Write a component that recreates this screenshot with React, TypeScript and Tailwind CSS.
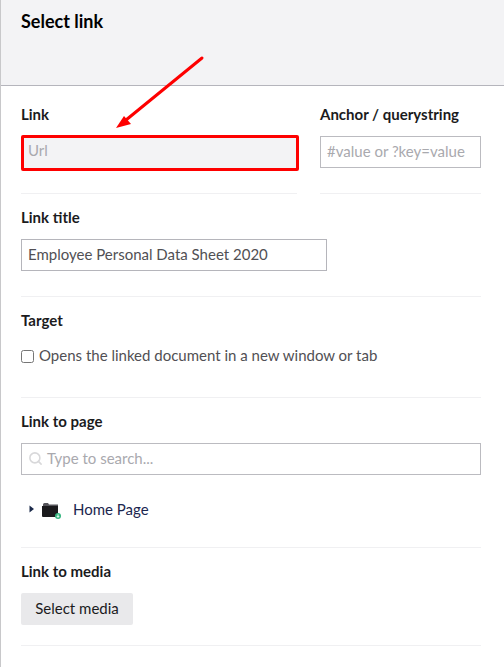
import { Search } from "lucide-react";

const font = { fontFamily: "Lato, 'Open Sans', sans-serif" };

const Label = ({ children }: { children: string }) => (
  <div className="text-[15px] leading-5 font-bold text-[#1b1b1d]">{children}</div>
);

const App = () => {
  return (
    <div className="relative h-[667px] w-[504px] overflow-hidden bg-white border-l border-[#c8c8ca]" style={font}>
      {/* Header */}
      <div className="h-[86px] bg-[#f3f3f5] border-b border-[#b5b5bc] pl-[20px] pt-[9px]">
        <h1 className="text-[18px] leading-6 font-bold text-[#000]">Select link</h1>
      </div>

      <div className="pl-[20px] pr-[23px]">
        {/* Link + anchor */}
        <div className="flex gap-[23px] pt-[18px]">
          <div className="w-[276px] border-b border-[#f0f0f2] h-[90px]">
            <Label>Link</Label>
            <div className="mt-[11px] w-[278px] h-[36px] pb-[6px] border-[3px] border-[#fe0000] rounded-[2px] bg-[#f3f3f5] flex items-center pl-[4px] text-[15px] text-[#a9a9ae]">
              Url
            </div>
          </div>
          <div className="w-[161px] border-b border-[#f0f0f2] h-[90px]">
            <Label>Anchor / querystring</Label>
            <div className="mt-[12px] w-[161px] h-[32px] pb-[2px] border border-[#bbbbc0] flex items-center pl-[6px] text-[15px] text-[#a9a9ae] whitespace-nowrap">
              #value or ?key=value
            </div>
          </div>
        </div>

        {/* Link title */}
        <section className="h-[103px] pt-[13px] border-b border-[#f0f0f2]">
          <Label>Link title</Label>
          <div className="mt-[12px] w-[306px] h-[32px] pb-[2px] border border-[#b5b5bb] flex items-center pl-[6px] text-[15px] text-[#515054] whitespace-nowrap">
            Employee Personal Data Sheet 2020
          </div>
        </section>

        {/* Target */}
        <section className="h-[101px] pt-[13px] border-b border-[#f0f0f2]">
          <Label>Target</Label>
          <label className="mt-[15px] flex items-center gap-[5px] text-[15px] leading-5 text-[#515054]">
            <input type="checkbox" className="w-[13px] h-[13px] mt-[2px] m-0" />
            Opens the linked document in a new window or tab
          </label>
        </section>

        {/* Link to page */}
        <section className="h-[150px] pt-[13px] border-b border-[#f0f0f2]">
          <Label>Link to page</Label>
          <div className="mt-[12px] h-[32px] pb-[2px] border border-[#bbbbc0] flex items-center pl-[6px] gap-[4px] text-[15px] text-[#a9a9ae]">
            <Search size={15} strokeWidth={2.5} className="text-[#d8d8da]" />
            Type to search...
          </div>
          <div className="mt-[24px] flex items-center pl-[8px] text-[15px] leading-5 text-[#1b264f]">
            <svg width="5" height="8" viewBox="0 0 5 8" className="mr-[8px]">
              <path d="M0.5 0.5 L5 4 L0.5 7.5 Z" fill="#1b2a4a" />
            </svg>
            <svg width="21" height="20" viewBox="0 0 21 20" className="mr-[10px]">
              <path d="M1 5.5 Q1 4 2.5 4 H6 L7 5.5 H16 V7 H1 Z" fill="#55545a" />
              <path d="M0 7 H16 V17 Q16 18 15 18 H1 Q0 18 0 17 Z" fill="#1b1a1d" />
              <circle cx="16" cy="17" r="3" fill="#35b57f" />
              <path d="M16 15.4 V18.2 M14.8 17 L16 18.4 L17.2 17" stroke="#fff" strokeWidth="0.9" fill="none" />
            </svg>
            Home Page
          </div>
        </section>

        {/* Link to media */}
        <section className="h-[98px] pt-[13px] border-b border-[#f0f0f2]">
          <Label>Link to media</Label>
          <button className="mt-[12px] block w-[112px] h-[32px] pb-[2px] rounded-[2px] bg-[#e9e9eb] text-[15px] text-[#1b1b1d]">
            Select media
          </button>
        </section>
      </div>

      {/* Annotation arrow */}
      <svg className="absolute left-[-1px] top-0" width="504" height="140" viewBox="0 0 504 140">
        <line x1="202" y1="58" x2="126" y2="120" stroke="#fe0000" strokeWidth="3" strokeLinecap="round" />
        <path d="M116 128 L124 116 L131 124 Z" fill="#fe0000" />
      </svg>
    </div>
  );
};

export default App;
